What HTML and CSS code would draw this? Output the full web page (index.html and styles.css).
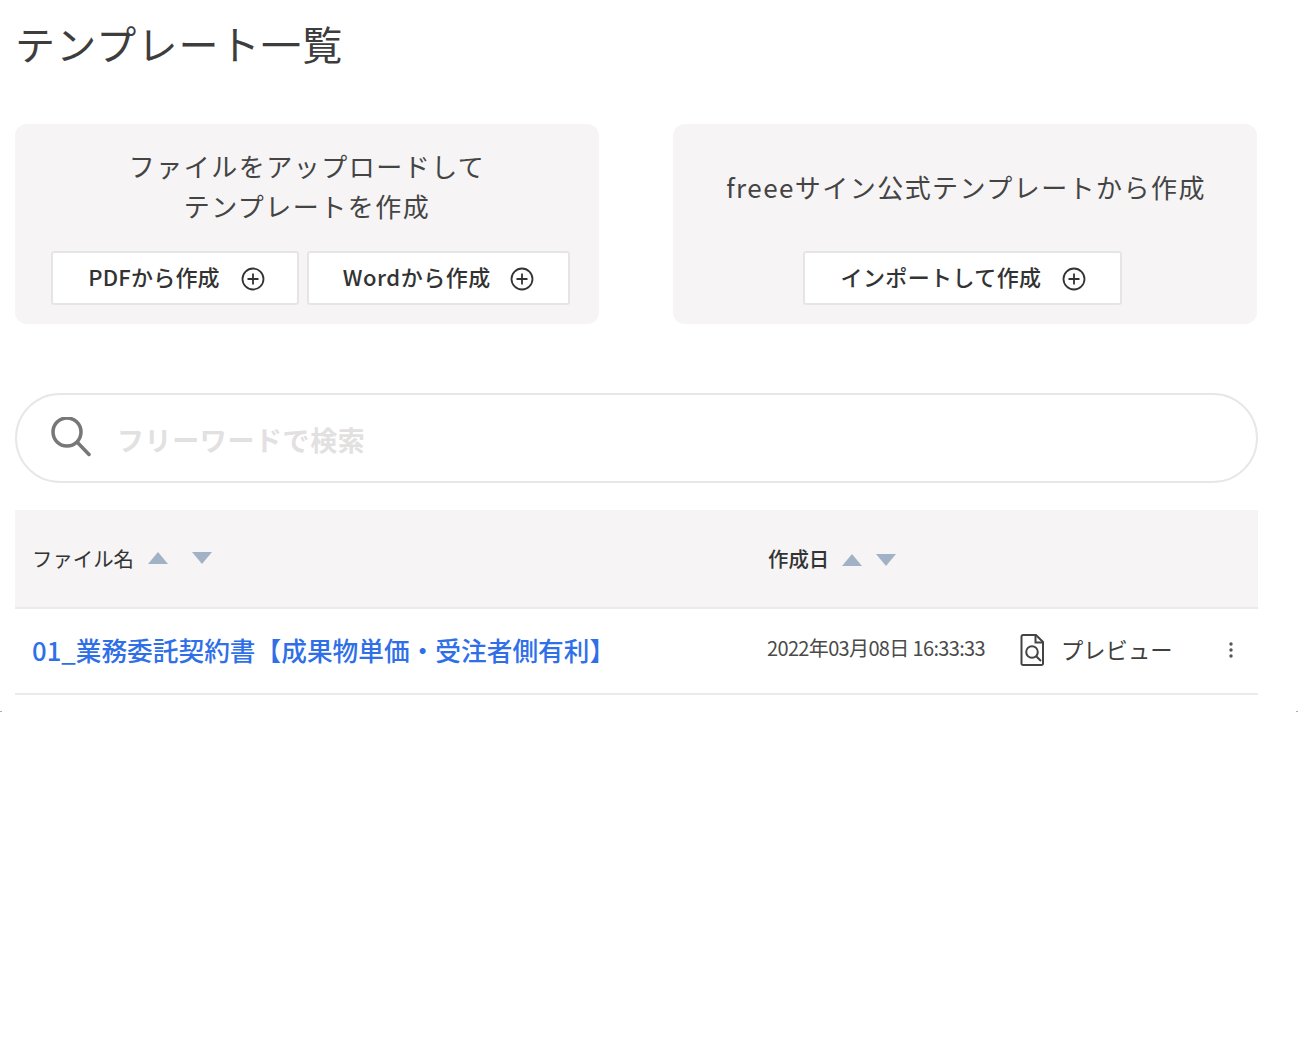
FILE: index.html
```html
<!DOCTYPE html>
<html lang="ja">
<head>
<meta charset="utf-8">
<title>テンプレート一覧</title>
<link rel="stylesheet" href="styles.css">
</head>
<body>
<main class="page">
  <h1 class="page-title">テンプレート一覧</h1>
  <section class="cards">
    <div class="card">
      <div class="card-title">ファイルをアップロードして<br>テンプレートを作成</div>
      <div class="card-actions card-actions-upload">
        <button class="btn btn-pdf" type="button">PDFから作成
          <svg class="plus" viewBox="0 0 24 24"><circle cx="12" cy="12" r="10.5"/><path d="M12 6.5v11M6.5 12h11"/></svg>
        </button>
        <button class="btn btn-word" type="button">Wordから作成
          <svg class="plus" viewBox="0 0 24 24"><circle cx="12" cy="12" r="10.5"/><path d="M12 6.5v11M6.5 12h11"/></svg>
        </button>
      </div>
    </div>
    <div class="card">
      <div class="card-title card-title-single">freeeサイン公式テンプレートから作成</div>
      <div class="card-actions card-actions-import">
        <button class="btn btn-import" type="button">インポートして作成
          <svg class="plus" viewBox="0 0 24 24"><circle cx="12" cy="12" r="10.5"/><path d="M12 6.5v11M6.5 12h11"/></svg>
        </button>
      </div>
    </div>
  </section>

  <label class="search">
    <svg class="search-icon" viewBox="0 0 40 40"><circle cx="16" cy="15" r="14"/><path d="M26.500 25.500L38 37.500"/></svg>
    <input class="search-input" type="text" placeholder="フリーワードで検索">
  </label>

  <div class="list">
    <div class="list-head">
      <div class="head-name">
        <span>ファイル名</span>
        <svg class="sort sort-wide" viewBox="0 0 20 12"><path d="M10 0l10 12H0z"/></svg>
        <svg class="sort sort-wide" viewBox="0 0 20 12"><path d="M0 0h20L10 12z"/></svg>
      </div>
      <div class="head-date">
        <span class="head-date-label">作成日</span>
        <svg class="sort sort-date" viewBox="0 0 20 12"><path d="M10 0l10 12H0z"/></svg>
        <svg class="sort sort-date" viewBox="0 0 20 12"><path d="M0 0h20L10 12z"/></svg>
      </div>
    </div>
    <div class="list-row">
      <a class="file-link" href="#">01_業務委託契約書【成果物単価・受注者側有利】</a>
      <div class="row-date">2022年03月08日 16:33:33</div>
      <div class="preview">
        <svg class="preview-icon" viewBox="0 0 24 32"><path class="doc" d="M3 1h13l7 7v21.500a1.500 1.500 0 0 1-1.500 1.500H3A1.500 1.500 0 0 1 1.500 29.500V2.500A1.500 1.500 0 0 1 3 1z"/><path class="doc" d="M15.500 1v7.500H23"/><circle class="doc" cx="12" cy="18" r="5.800"/><path class="doc" d="M16.200 22.200l4.800 4.800"/></svg>
        <span class="preview-label">プレビュー</span>
      </div>
      <svg class="kebab" viewBox="0 0 6 16"><circle cx="3" cy="2" r="1.700"/><circle cx="3" cy="8" r="1.700"/><circle cx="3" cy="14" r="1.700"/></svg>
    </div>
  </div>
</main>
<div class="edge-marks"><span class="edge-mark"></span><span class="edge-mark"></span></div>
</body>
</html>
```

FILE: styles.css
```css
* { box-sizing: border-box; }
html, body { margin: 0; padding: 0; background: #fff; }
body {
  font-family: "Noto Sans CJK JP", "Noto Sans", sans-serif;
  color: #3b3b3b;
}
.page { width: 1258px; padding-left: 15px; }
.page-title {
  margin: 0 0 34px;
  height: 90px;
  font-size: 40px;
  line-height: 86px;
  font-weight: 400;
  letter-spacing: 1.200px;
  color: #3d3d3d;
}
.cards { display: grid; grid-template-columns: 584px 584px; column-gap: 74px; }
.card {
  height: 200px;
  padding-top: 22px;
  background: #f6f4f5;
  border-radius: 12px;
}
.card-title {
  height: 80px;
  display: flex;
  align-items: center;
  justify-content: center;
  text-align: center;
  font-size: 26px;
  line-height: 40px;
  letter-spacing: 1.500px;
  color: #444;
}
.card-title-single { padding: 2px 0 0 2px; letter-spacing: 1.450px; }
.card-actions { display: flex; justify-content: center; gap: 8px; margin-top: 25px; }
.card-actions-upload { padding-left: 7px; }
.card-actions-import { padding-right: 5px; }
.btn {
  display: flex;
  align-items: center;
  gap: 21px;
  height: 54px;
  padding-bottom: 6px;
  background: #fff;
  border: 2px solid #e6e5e6;
  border-radius: 3px;
  font-family: inherit;
  font-size: 22px;
  font-weight: 500;
  color: #333;
  white-space: nowrap;
}
.btn-pdf { padding-left: 35px; padding-right: 32px; letter-spacing: 0.200px; }
.btn-word { padding-left: 34px; padding-right: 34px; letter-spacing: 0.500px; gap: 19px; }
.btn-import { padding-left: 36px; padding-right: 34px; letter-spacing: 0.400px; }
.plus { width: 24px; height: 24px; margin-top: 6px; flex: none; fill: none; stroke: #333; stroke-width: 1.800; }
.search {
  display: flex;
  align-items: center;
  margin-top: 69px;
  height: 90px;
  padding-left: 34px;
  border: 2px solid #e8e7e8;
  border-radius: 45px;
}
.search-icon { width: 40px; height: 40px; margin-top: -2px; flex: none; fill: none; stroke: #777; stroke-width: 3.500; stroke-linecap: round; }
.search-input {
  flex: 1;
  margin-left: 26px;
  border: 0;
  outline: 0;
  background: transparent;
  padding: 3px 0 0;
  font-family: inherit;
  font-size: 27px;
  letter-spacing: 0.600px;
  font-weight: 700;
}
.search-input::placeholder { color: #e2e0e0; opacity: 1; }
.list { margin-top: 27px; }
.list-head {
  display: flex;
  align-items: center;
  height: 99px;
  background: #f6f4f5;
  border-bottom: 2px solid #e9e9ee;
}
.head-name, .head-date { display: flex; align-items: center; font-size: 20.400px; color: #333; }
.head-name { width: 752px; padding-left: 17px; padding-bottom: 2px; gap: 14px; }
.head-date { padding-left: 1px; padding-bottom: 2px; gap: 14px; font-weight: 500; }
.head-date-label { margin-right: -1px; }
.sort { width: 20px; height: 12px; fill: #a2b2c6; }
.sort-wide { margin-right: 10px; margin-top: 1px; }
.head-name .sort-wide:last-child { margin-right: 0; }
.sort-date { margin-top: 4px; }
.list-row {
  display: flex;
  align-items: center;
  height: 86px;
  border-bottom: 2px solid #e9e9ee;
}
.file-link {
  width: 752px;
  padding-left: 17px;
  padding-bottom: 4px;
  font-size: 25.700px;
  font-weight: 500;
  color: #2f6fe8;
  text-decoration: none;
  white-space: nowrap;
}
.row-date { width: 253px; padding-bottom: 8px; font-size: 20px; letter-spacing: -0.650px; color: #4a4a4a; white-space: nowrap; }
.preview { display: flex; align-items: center; gap: 17px; width: 208px; padding-bottom: 3px; font-size: 22.300px; color: #3f3f3f; }
.preview-label { margin-top: -1px; }
.preview-icon { width: 24px; height: 32px; flex: none; }
.doc { fill: none; stroke: #444; stroke-width: 2; }
.kebab { width: 6px; height: 16px; fill: #555; margin-top: -2px; }
.edge-marks { display: flex; justify-content: space-between; margin-top: 16px; }
.edge-mark { width: 2px; height: 1px; background: #aaa; }
```
